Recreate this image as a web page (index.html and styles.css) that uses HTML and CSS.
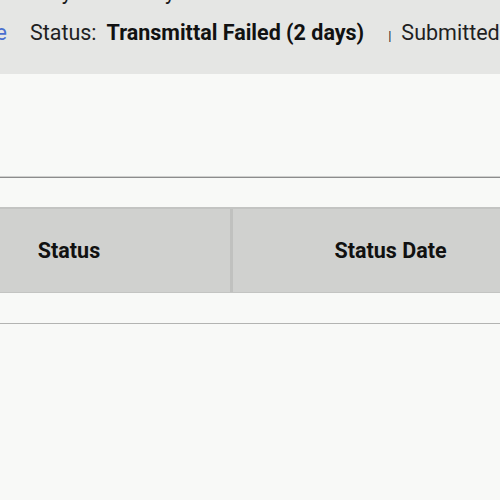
FILE: index.html
```html
<!DOCTYPE html>
<html>
<head>
<meta charset="utf-8">
<link rel="stylesheet" href="styles.css">
</head>
<body>
<div class="band">
  <div class="prev"><span class="w1">Survey</span><span class="w2">Delivery</span></div>
  <div class="status-row">
    <a class="link">Change</a>
    <span class="label">Status:</span>
    <span class="value">Transmittal Failed (2 days)</span>
    <span class="sep">|</span>
    <span class="label">Submitted by Agency</span>
  </div>
</div>
<div class="rule"></div>
<div class="table-head">
  <div class="th th-first">Status</div>
  <div class="th th-second">Status Date</div>
</div>
<div class="rule-light"></div>
</body>
</html>
```
FILE: styles.css
```css
html, body {
  margin: 0;
  padding: 0;
}
body {
  background: #f8f9f7;
  font-family: Roboto, "Liberation Sans", sans-serif;
  color: #1a1a1a;
  overflow: hidden;
  width: 500px;
  height: 500px;
}
.band {
  height: 74px;
  background: #e5e6e4;
  overflow: hidden;
}
.prev {
  display: flex;
  height: 24px;
  line-height: 24px;
  font-size: 21.5px;
  margin-top: -20px;
  white-space: nowrap;
}
.w1 { margin-left: 8px; }
.w2 { margin-left: 28px; }
.status-row {
  display: flex;
  align-items: baseline;
  margin-top: 17px;
  height: 24px;
  line-height: 24px;
  font-size: 21.5px;
  white-space: nowrap;
}
.link {
  color: #4a6fcf;
  margin-left: -66px;
}
.label {
  margin-left: 23px;
  color: #1f1f1f;
}
.value {
  font-weight: bold;
  margin-left: 10px;
  color: #111;
}
.sep {
  font-size: 13px;
  margin-left: 24px;
  margin-right: -13px;
  color: #222;
}
.rule {
  margin-top: 102px;
  height: 1px;
  border-top: 1px solid #cfd0ce;
  background: #8c8c8c;
}
.table-head {
  margin-top: 29px;
  margin-left: -92px;
  display: grid;
  grid-template-columns: 322px 318px;
  height: 83px;
  border-top: 2px solid #c3c4c2;
  border-bottom: 1px solid #c3c4c2;
  background: #d0d1cf;
  width: 643px;
}
.th {
  display: flex;
  align-items: center;
  justify-content: center;
  font-weight: bold;
  font-size: 21.5px;
  color: #111;
}
.th-second {
  border-left: 3px solid #c0c1bf;
}
.rule-light {
  margin-top: 30px;
  height: 1px;
  background: #b3b4b2;
}
```
